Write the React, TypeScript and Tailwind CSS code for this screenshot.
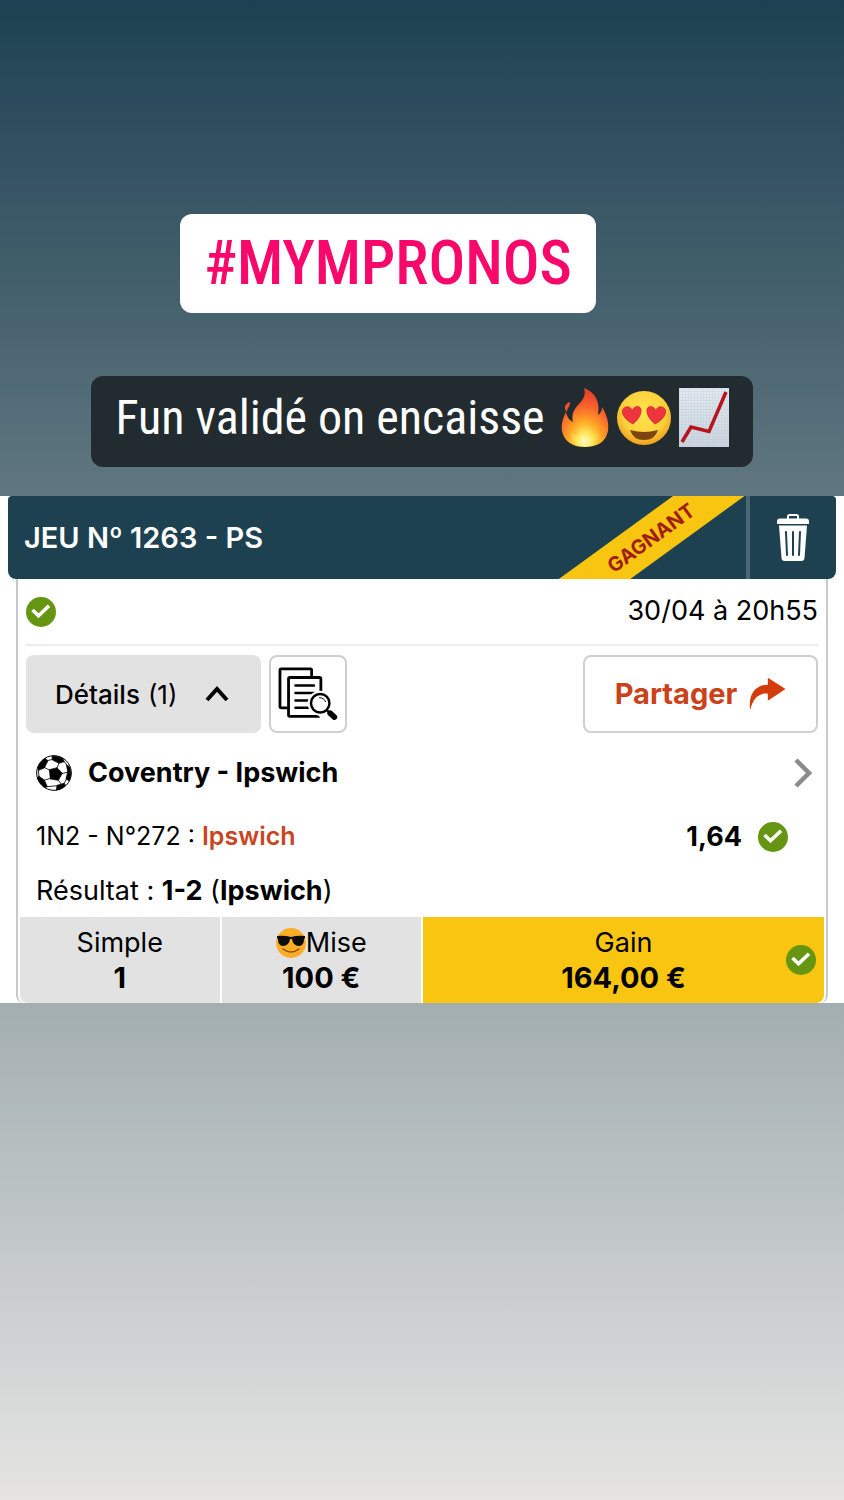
import type { ReactNode } from "react";

function CheckBadge() {
  return (
    <svg viewBox="0 0 30 30" className="w-[30px] h-[30px] shrink-0" role="img" aria-label="Gagné">
      <circle cx="15" cy="15" r="15" fill="#659511" />
      <path d="M6.5 13 12.5 18.8 23 8.8" fill="none" stroke="#fff" strokeWidth="3.6" />
    </svg>
  );
}

function TrashIcon() {
  return (
    <svg viewBox="0 0 32 47" className="w-8 h-[47px]" aria-hidden="true">
      <path d="M11 5V2.5Q11 1 12.500 1h7Q21 1 21 2.500V5" fill="none" stroke="#fff" strokeWidth="2" />
      <path d="M0 10V7.500Q0 4.500 3 4.500H29Q32 4.500 32 7.500V10z" fill="#fff" />
      <path d="M2 11.500H30L27.500 44Q27.300 47 24.500 47H7.500Q4.700 47 4.500 44z" fill="#fff" />
      <path d="M9 18 10 41M16 18V41M23 18 22 41" stroke="#1e4151" strokeWidth="2" strokeLinecap="round" />
    </svg>
  );
}

function DocsIcon() {
  return (
    <svg viewBox="22 32 188 168" className="w-[62px] h-14" fill="none" stroke="#000" strokeLinejoin="round" aria-hidden="true">
      <path d="M54 158H35Q31 158 31 154V44Q31 40 35 40H123Q127 40 127 44V62" strokeWidth="8.500" />
      <rect x="57" y="66" width="98" height="118" rx="4" strokeWidth="8.500" />
      <path d="M78 90H134M78 113H134M78 136H118M78 158H122" strokeWidth="7.500" strokeLinecap="round" />
      <circle cx="153" cy="144" r="38" fill="#fff" stroke="none" />
      <path d="M152 172 170 202" stroke="#fff" strokeWidth="16" />
      <circle cx="153" cy="144" r="28" fill="#fff" strokeWidth="7.500" />
      <path d="M151 127Q164 127 169 139" strokeWidth="3" strokeLinecap="round" />
      <path d="M174 166 184 175" strokeWidth="7" />
      <path d="M183 174 196 186" strokeWidth="17" strokeLinecap="round" />
    </svg>
  );
}

function BallIcon() {
  return (
    <svg viewBox="13 14 108 108" className="w-9 h-9 shrink-0" aria-hidden="true">
      <circle cx="67" cy="68" r="52" fill="#fff" stroke="#000" strokeWidth="3" />
      <g fill="#000" stroke="#000" strokeWidth="2" strokeLinejoin="round">
        <path d="M53 58 76 52 92 69 80 90 56 86z" />
        <path d="M18 52Q25 34 40 24L49 31 38 53 21 60z" />
        <path d="M61 17Q80 16 94 25L98 34 82 39 62 29z" />
        <path d="M104 42 114 50Q121 72 113 92L103 86 108 65z" />
        <path d="M76 105 97 99 102 105Q90 117 74 119z" />
        <path d="M21 77 38 89 47 109 40 112Q24 101 17 84z" />
      </g>
      <path d="M55 60 37 51M76 54 82 37M90 70 110 65M79 88 90 103M57 84 37 90M47 31 63 27M97 33 105 43M105 84 97 101M78 106 45 109M22 79 20 58" stroke="#000" strokeWidth="2.500" />
    </svg>
  );
}

function ShareIcon() {
  return (
    <svg viewBox="34 34 110 102" className="w-[37px] h-[34px]" aria-hidden="true">
      <path d="M37 133C30 85 54 57 90 57V36L143 70 90 105V84C64 81 46 96 37 133z" fill="#d43c0b" />
    </svg>
  );
}

function FireEmoji() {
  return (
    <svg viewBox="0 0 48 60" className="w-12 h-[60px]" role="img" aria-label="feu">
      <defs>
        <radialGradient id="fire" cx="0.5" cy="0.93" r="0.85">
          <stop offset="0" stopColor="#fff79a" />
          <stop offset="0.2" stopColor="#ffe04a" />
          <stop offset="0.45" stopColor="#ffa126" />
          <stop offset="0.75" stopColor="#f9602c" />
          <stop offset="1" stopColor="#e8432c" />
        </radialGradient>
        <radialGradient id="ember" cx="0.5" cy="0.85" r="0.6">
          <stop offset="0" stopColor="#fffcc0" />
          <stop offset="0.5" stopColor="#ffe458" stopOpacity="0.9" />
          <stop offset="1" stopColor="#ffb52e" stopOpacity="0.2" />
        </radialGradient>
      </defs>
      <path d="M23 0C36 5 39 16 37 27C40 25 41 22 41 19C46 27 48 35 47 43C45 54 36 59 24 59C11 59 3 53 1 43C0 36 2 30 5 24C6 29 8 32 12 34C10 27 13 21 18 16C23 11 25 6 23 0z" fill="url(#fire)" />
      <path d="M9 14C10 18 6 19 6 24C2 20 4 16 9 14z" fill="#ee512c" />
      <path d="M24 58C13 58 8 50 9 41C11 45 14 48 18 48C15 39 21 33 24 27C25 34 31 37 31 46C34 45 36 42 37 38C41 48 36 58 24 58z" fill="url(#ember)" />
    </svg>
  );
}

function HeartEyesEmoji() {
  return (
    <svg viewBox="0 0 54 54" className="w-[54px] h-[54px]" role="img" aria-label="yeux en cœur">
      <defs>
        <radialGradient id="face" cx="0.5" cy="0.4" r="0.6">
          <stop offset="0" stopColor="#ffe651" />
          <stop offset="0.65" stopColor="#fdd23c" />
          <stop offset="1" stopColor="#f0a01e" />
        </radialGradient>
      </defs>
      <circle cx="27" cy="27" r="27" fill="url(#face)" />
      <path d="M16 33C6 28 3 20 7 17C11 14 15 17 15 20C16 16 22 13 24 18C25 23 21 29 16 33z" fill="#ee343c" stroke="#c92b2b" strokeWidth="0.700" />
      <path d="M38 33C48 28 51 20 47 17C43 14 39 17 39 20C38 16 32 13 30 18C29 23 33 29 38 33z" fill="#ee343c" stroke="#c92b2b" strokeWidth="0.700" />
      <path d="M13 39Q27 43 41 39Q38 49 27 49Q16 49 13 39z" fill="#7c4510" />
    </svg>
  );
}

function ChartEmoji() {
  return (
    <svg viewBox="0 0 50 59" className="w-[50px] h-[59px]" role="img" aria-label="courbe en hausse">
      <defs>
        <linearGradient id="paper" x1="0" y1="0" x2="0" y2="1">
          <stop offset="0" stopColor="#e3eaf0" />
          <stop offset="1" stopColor="#cbd4de" />
        </linearGradient>
        <pattern id="grid" width="3" height="3" patternUnits="userSpaceOnUse">
          <path d="M0 0H3M0 0V3" stroke="#b3c3d2" strokeWidth="0.500" />
        </pattern>
      </defs>
      <rect width="50" height="59" fill="url(#paper)" />
      <rect width="50" height="59" fill="url(#grid)" />
      <path d="M3 54 12 39 30 43.500 47 4" fill="none" stroke="#b8141c" strokeWidth="3.500" />
    </svg>
  );
}

function SunglassesEmoji() {
  return (
    <svg viewBox="0 0 30 30" className="w-[30px] h-[30px]" role="img" aria-label="lunettes de soleil">
      <circle cx="15" cy="15" r="15" fill="#fbad27" />
      <path d="M1 8Q8 7 15 9Q22 7 29 8V10L28 11Q28 18 23 18Q17 18 16 11H14Q13 18 7 18Q2 18 2 11L1 10z" fill="#0c0c0c" />
      <path d="M7 21Q15 27 23 21" fill="none" stroke="#8a4b0b" strokeWidth="1.500" strokeLinecap="round" />
    </svg>
  );
}

function Cell({ label, value, className }: { label: ReactNode; value: string; className: string }) {
  return (
    <div className={`flex flex-col items-center pt-2 pb-2 leading-[35px] ${className}`}>
      <dt className="flex items-center text-[27px]">{label}</dt>
      <dd className="text-[29px] font-bold">{value}</dd>
    </div>
  );
}

export default function App() {
  return (
    <main className="min-h-screen bg-linear-to-b from-[#1d4152] via-[#839499] to-[#e5e4e3] text-black font-['Inter','Liberation_Sans',sans-serif]">
      {/* Stickers */}
      <div className="flex flex-col items-center gap-[63px] pt-[214px] pb-[29px] font-['Roboto_Condensed','Roboto',sans-serif]">
        <a href="#mympronos" className="mr-[68px] rounded-xl bg-white px-6 text-[61px] leading-[99px] font-medium text-[#f8086a]">
          #MYMPRONOS
        </a>
        <p className="flex items-center gap-2 rounded-xl bg-[#222c30] px-6 pb-2 text-[48px] leading-[83px] text-white">
          <span className="mr-2">Fun validé on encaisse</span>
          <FireEmoji />
          <HeartEyesEmoji />
          <ChartEmoji />
        </p>
      </div>

      {/* Bet slip */}
      <section className="bg-white px-2">
        <header className="flex h-[83px] overflow-hidden rounded-t-sm rounded-b-lg bg-[#1e4151] text-white">
          <h1 className="flex-1 self-center pl-4 text-[29px] font-semibold">JEU Nº 1263 - PS</h1>
          <div className="flex w-[190px] items-center justify-center overflow-hidden">
            <span className="w-[260px] shrink-0 -rotate-36 bg-[#f8c510] text-center text-[20px] leading-[42px] font-bold text-[#a01d10]">
              GAGNANT
            </span>
          </div>
          <button type="button" aria-label="Supprimer" className="flex w-[90px] items-center justify-center border-l-4 border-[#4b6774]">
            <TrashIcon />
          </button>
        </header>

        <div className="mx-2 rounded-b-lg border-x-2 border-[#c9c9cb]">
          <div className="px-2">
            <div className="flex h-[67px] items-center justify-between border-b-2 border-[#ececec]">
              <CheckBadge />
              <time className="text-[27px]">30/04 à 20h55</time>
            </div>

            <div className="flex gap-2 pt-[9px]">
              <button type="button" className="flex h-[78px] w-[235px] items-center rounded-lg bg-[#e2e2e2] pl-[29px] text-[26px]">
                <span className="font-medium">Détails</span>
                <span className="ml-2">(1)</span>
                <svg viewBox="0 0 24 16" className="ml-7 h-4 w-6" aria-hidden="true">
                  <path d="M2 14 12 3 22 14" fill="none" stroke="#000" strokeWidth="4" />
                </svg>
              </button>
              <button type="button" aria-label="Voir le ticket" className="flex h-[78px] w-[78px] items-center justify-center rounded-lg border-2 border-[#cfcfcf]">
                <DocsIcon />
              </button>
              <button type="button" className="ml-auto flex h-[78px] w-[235px] items-center justify-center gap-3 rounded-lg border-2 border-[#cfcfcf] text-[29px] font-bold text-[#cb4218]">
                Partager
                <ShareIcon />
              </button>
            </div>

            <a href="#match" className="flex h-20 items-center gap-4 pr-[6px] pl-[10px] text-[27px] font-bold">
              <BallIcon />
              Coventry - Ipswich
              <svg viewBox="0 0 18 30" className="ml-auto h-[30px] w-[18px]" aria-hidden="true">
                <path d="M2 2 15 15 2 28" fill="none" stroke="#8b8b8b" strokeWidth="4.500" />
              </svg>
            </a>

            <div className="flex h-12 items-center pr-[30px] pl-[10px] text-[25px]">
              <p>
                1N2 - N°272 : <span className="font-semibold text-[#c9451f]">Ipswich</span>
              </p>
              <strong className="mr-4 ml-auto text-[27px] font-bold">1,64</strong>
              <CheckBadge />
            </div>
            <p className="h-14 pl-[10px] text-[27px] leading-[60px]">
              Résultat : <b>1-2</b> (<b>Ipswich</b>)
            </p>
          </div>

          <dl className="mx-[2px] grid grid-cols-4 gap-[2px] overflow-hidden rounded-b-lg">
            <Cell label="Simple" value="1" className="bg-[#e2e2e2]" />
            <Cell label={<><SunglassesEmoji />Mise</>} value="100 €" className="bg-[#e2e2e2]" />
            <div className="relative col-span-2">
              <Cell label="Gain" value="164,00 €" className="bg-[#f8c510]" />
              <div className="absolute inset-y-0 right-2 flex items-center">
                <CheckBadge />
              </div>
            </div>
          </dl>
        </div>
      </section>
    </main>
  );
}
